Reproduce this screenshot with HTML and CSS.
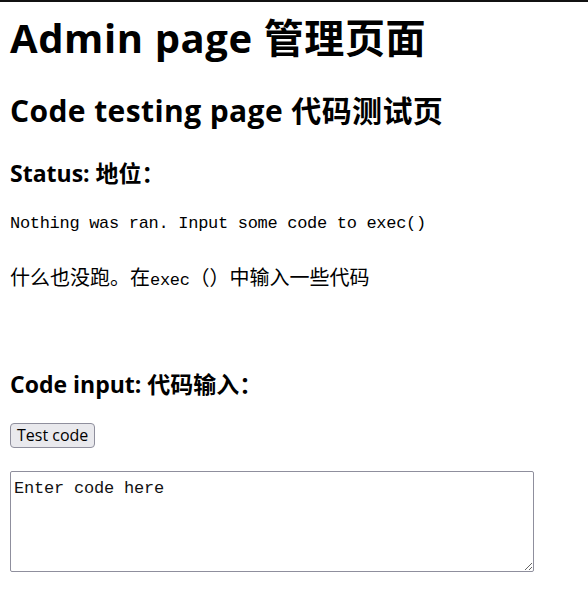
FILE: index.html
```html
<!DOCTYPE html>
<html lang="zh">
<head>
<meta charset="utf-8">
<title>Admin page</title>
<link rel="stylesheet" href="styles.css">
</head>
<body>
<div class="topbar"></div>
<main class="page">
  <h1 class="title">Admin page 管理页面</h1>
  <h2 class="subtitle">Code testing page 代码测试页</h2>
  <h3 class="section status-head">Status: 地位：</h3>
  <p class="msg-en">Nothing was ran. Input some code to exec()</p>
  <p class="msg-zh">什么也没跑。在<span class="latin">exec</span>（）中输入一些代码</p>
  <h3 class="section input-head">Code input: 代码输入：</h3>
  <div class="actions"><button class="btn" type="button">Test code</button></div>
  <textarea class="code" placeholder="Enter code here"></textarea>
</main>
</body>
</html>
```

FILE: styles.css
```css
html, body {
  margin: 0;
  padding: 0;
  background: #fff;
  color: #000;
}
.topbar {
  height: 2px;
  background: #111;
}
.page {
  display: flex;
  flex-direction: column;
  align-items: flex-start;
  padding: 0 10px;
  font-family: "Open Sans", "Noto Sans CJK SC", sans-serif;
}
.title {
  font-size: 40px;
  font-weight: 700;
  line-height: 48px;
  letter-spacing: 0.6px;
  margin: 11.5px 0 0;
}
.subtitle {
  font-size: 30px;
  font-weight: 700;
  line-height: 36px;
  letter-spacing: 0.4px;
  margin: 31px 0 0;
}
.section {
  font-size: 23px;
  font-weight: 700;
  line-height: 28px;
  margin: 0;
}
.status-head { margin-top: 30.5px; }
.input-head { margin-top: 77px; }
.msg-en {
  font-family: "Liberation Mono", monospace;
  font-size: 17px;
  letter-spacing: -0.3px;
  line-height: 24px;
  margin: 24.5px 0 0;
}
.msg-zh {
  font-family: "Noto Sans CJK SC", sans-serif;
  font-size: 20px;
  line-height: 24px;
  margin: 29.5px 0 0;
}
.latin {
  font-family: "Liberation Mono", monospace;
  font-size: 17px;
  letter-spacing: -0.3px;
}
.actions {
  margin-top: 25px;
}
.btn {
  font-family: "Open Sans", sans-serif;
  font-size: 16px;
  line-height: 21px;
  height: 25px;
  padding: 0 6px;
  background: #e9e9ed;
  border: 1px solid #8f8f9d;
  border-radius: 4px;
  color: #000;
}
.code {
  margin-top: 23px;
  box-sizing: border-box;
  width: 524px;
  height: 101px;
  padding: 7px 3px 3px;
  border: 1px solid #8f8f9d;
  border-radius: 2px;
  font-family: "Liberation Mono", monospace;
  font-size: 17px;
  letter-spacing: -0.2px;
  line-height: 20px;
  color: #000;
}
.code::placeholder {
  color: #111;
  opacity: 1;
}
```
